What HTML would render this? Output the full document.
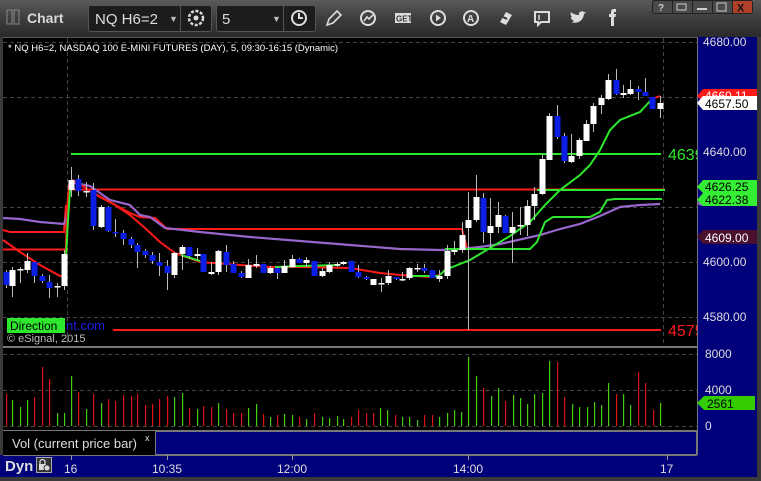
<!DOCTYPE html>
<html><head><meta charset="utf-8"><style>
html,body{margin:0;padding:0;background:#2b2b2b;}
svg{display:block;font-family:"Liberation Sans",sans-serif;}
</style></head><body>
<svg id="s" width="761" height="481" viewBox="0 0 761 481" xmlns="http://www.w3.org/2000/svg">
<defs>
<linearGradient id="tb" x1="0" y1="0" x2="0" y2="1"><stop offset="0" stop-color="#5a5a5a"/><stop offset="0.5" stop-color="#3d3d3d"/><stop offset="1" stop-color="#2a2a2a"/></linearGradient>
</defs>
<rect x="0" y="0" width="761" height="481" fill="#3a3a3a"/>
<rect x="0" y="0" width="761" height="37" fill="url(#tb)"/>
<rect x="7" y="10" width="5" height="14" fill="none" stroke="#888" stroke-width="1"/>
<rect x="14" y="10" width="5" height="14" fill="none" stroke="#888" stroke-width="1"/>
<text x="27" y="23" font-size="14" font-weight="bold" fill="#d8d8d8">Chart</text>
<rect x="88.5" y="5.5" width="123" height="26" rx="2" fill="#1c1c1c" stroke="#555"/>
<line x1="180.5" y1="6" x2="180.5" y2="31" stroke="#555"/>
<text x="95" y="24" font-size="15" fill="#ddd">NQ H6=2</text>
<text x="169" y="22" font-size="9" fill="#bbb">▼</text>
<circle cx="196" cy="18" r="7" fill="none" stroke="#ddd" stroke-width="2.5" stroke-dasharray="3 1.6"/>
<circle cx="196" cy="18" r="2.5" fill="#ddd"/>
<rect x="216.5" y="5.5" width="99" height="26" rx="2" fill="#1c1c1c" stroke="#555"/>
<line x1="283.5" y1="6" x2="283.5" y2="31" stroke="#555"/>
<text x="222" y="24" font-size="15" fill="#ddd">5</text>
<text x="272" y="22" font-size="9" fill="#bbb">▼</text>
<circle cx="299" cy="18" r="7" fill="none" stroke="#ddd" stroke-width="2"/>
<path d="M299 13v5h4" fill="none" stroke="#ddd" stroke-width="2"/>
<path d="M327 25l2-6 8-8 4 4-8 8z" fill="none" stroke="#ddd" stroke-width="1.6"/>
<circle cx="368" cy="18" r="7" fill="none" stroke="#ddd" stroke-width="2"/>
<path d="M364 21l3-4 2 2 4-4" fill="none" stroke="#ddd" stroke-width="1.6"/>
<rect x="395" y="13" width="16" height="10" fill="#ddd"/>
<text x="396" y="21.5" font-size="8" font-weight="bold" fill="#333">GET</text>
<circle cx="438" cy="18" r="7" fill="none" stroke="#ddd" stroke-width="2"/>
<path d="M436 14.5v7l5-3.5z" fill="#ddd"/>
<circle cx="471" cy="18" r="7" fill="none" stroke="#ddd" stroke-width="2"/>
<text x="467" y="22" font-size="10" font-weight="bold" fill="#ddd">A</text>
<path d="M500 22l6-10 6 3-6 10z" fill="#ddd"/>
<path d="M503 17l4 2" stroke="#333" stroke-width="2"/>
<path d="M535 12h14v10h-8l-3 3v-3h-3z" fill="none" stroke="#ddd" stroke-width="2"/>
<line x1="539" y1="15" x2="539" y2="20" stroke="#ddd" stroke-width="1.5"/>
<path d="M571 22c5 2 12 0 13-8l2-2-2 0c-2-2-6 0-5 3-3 0-6-1-8-3 -1 2 0 4 1 5h-1c0 2 1 3 3 4-1 1-2 1-3 1z" fill="#ddd"/>
<path d="M611 26v-9h-2v-3h2v-2c0-2 1-3 3-3h2v3h-1c-1 0-1 0-1 1v1h2l-0.5 3h-1.5v9z" fill="#ddd"/>
<rect x="652.5" y="0.5" width="100" height="13" rx="2" fill="#4a4a4a" stroke="#222"/>
<rect x="733" y="1" width="19" height="12" fill="#b0402a"/>
<line x1="672.5" y1="0" x2="672.5" y2="14" stroke="#222"/><line x1="692.5" y1="0" x2="692.5" y2="14" stroke="#222"/><line x1="712.5" y1="0" x2="712.5" y2="14" stroke="#222"/><line x1="732.5" y1="0" x2="732.5" y2="14" stroke="#222"/>
<text x="658" y="11" font-size="10" font-weight="bold" fill="#ccc">?</text>
<rect x="677" y="4" width="9" height="6" fill="none" stroke="#ccc"/>
<line x1="697" y1="9" x2="707" y2="9" stroke="#ccc" stroke-width="2"/>
<rect x="717" y="3" width="9" height="8" fill="none" stroke="#ccc"/>
<text x="737" y="11.5" font-size="11" font-weight="bold" fill="#111">X</text>

<rect x="3" y="37" width="694" height="418" fill="#000"/>
<rect x="697" y="37" width="61" height="418" fill="#00007a"/>
<rect x="0" y="455" width="761" height="26" fill="#00007a"/>
<rect x="0" y="477" width="761" height="4" fill="#3a3a3a"/>
<rect x="757" y="37" width="4" height="444" fill="#3a3a3a"/>
<line x1="697.5" y1="37" x2="697.5" y2="455" stroke="#777"/>
<line x1="3" y1="37.5" x2="697" y2="37.5" stroke="#555"/>
<g stroke="#444" stroke-dasharray="4 3" stroke-width="1">
<line x1="3" y1="42.5" x2="697" y2="42.5"/><line x1="3" y1="97.5" x2="697" y2="97.5"/><line x1="3" y1="207.5" x2="697" y2="207.5"/><line x1="3" y1="262.5" x2="697" y2="262.5"/><line x1="3" y1="317.5" x2="697" y2="317.5"/>
<line x1="3" y1="354.5" x2="697" y2="354.5"/><line x1="3" y1="390.5" x2="697" y2="390.5"/><line x1="3" y1="426.5" x2="697" y2="426.5"/>
<line x1="67.5" y1="38" x2="67.5" y2="347"/><line x1="663.5" y1="38" x2="663.5" y2="347"/>
</g>
<text x="8" y="51" font-size="9.5" fill="#fff">* NQ H6=2, NASDAQ 100 E-MINI FUTURES (DAY), 5, 09:30-16:15 (Dynamic)</text>
<line x1="71" y1="154" x2="661" y2="154" stroke="#2ee82e" stroke-width="2"/>
<line x1="71" y1="189.5" x2="665" y2="189.5" stroke="#ff1a1a" stroke-width="2"/>
<line x1="537" y1="190" x2="665" y2="190" stroke="#2ee82e" stroke-width="2"/>
<line x1="113" y1="330" x2="661" y2="330" stroke="#ff1a1a" stroke-width="2"/>
<polyline fill="none" stroke="#ff1a1a" stroke-width="2" points="88,190 130,213 140,217 155,218 167,229 462,229 467,248"/>
<polyline fill="none" stroke="#ff1a1a" stroke-width="2" points="3,230 10,232 64,232 66,205"/>
<line x1="3" y1="249.5" x2="68" y2="249.5" stroke="#ff1a1a" stroke-width="2"/>
<polyline fill="none" stroke="#9966cc" stroke-width="2.2" points="3,218 20,219 40,222 64,224 66,218 71,182 90,186 110,200 130,205 140,215 150,217 165,228 200,232 250,237 300,241 350,245 400,249 440,250 460,249 480,247 500,244 540,235 560,229 580,224 600,216 620,207 640,205 660,204"/>
<polyline fill="none" stroke="#ff1a1a" stroke-width="2" points="3,240 20,252 40,265 60,276 65,276 67,210 69,185 72,180 86,188 100,197 115,205 130,215 145,228 160,242 175,253 200,262 240,265 270,267 300,267 350,268 380,273 400,275 430,277 440,275"/>
<g fill="none" stroke="#2ee82e" stroke-width="2">
<polyline points="66,258 68,220 70,190 72,180"/>
<polyline points="181,255 200,261"/>
<polyline points="275,267 300,266 340,265"/>
<polyline points="410,276 440,276"/>
<polyline points="440,275 445,270 470,260 490,248 510,236 530,222 545,205 560,190 580,175 590,165 600,150 610,130 620,120 640,112 652,99"/>
<polyline points="445,249 530,249 537,242 545,222 553,217 590,217 600,212 607,200 615,199 662,199"/>
</g>
<line x1="652" y1="99" x2="660" y2="96" stroke="#ff1a1a" stroke-width="2"/>
<g id="candles"></g>
<text x="668" y="160" font-size="16" fill="#2ee82e">4639</text>
<text x="668" y="336" font-size="16" fill="#ff1a1a">4575</text>
<rect x="697" y="37" width="60" height="310" fill="#00007a"/>
<line x1="697.5" y1="37" x2="697.5" y2="455" stroke="#777"/>
<g font-size="12" fill="#ddd">
<text x="703" y="46">4680.00</text>
<text x="703" y="156">4640.00</text>
<text x="703" y="266">4600.00</text>
<text x="703" y="321">4580.00</text>
</g>
<path d="M697 96l6-7h54v13h-54z" fill="#ff1a1a"/><text x="705" y="100" font-size="12" fill="#fff">4660.11</text>
<path d="M697 103l6-7h54v14h-54z" fill="#fff"/><text x="705" y="108" font-size="12" fill="#000">4657.50</text>
<path d="M697 204l5-6h55v8h-55z" fill="#9966cc"/>
<path d="M697 187l6-7h54v13h-54z" fill="#33ee33"/><text x="705" y="191" font-size="12" fill="#000">4626.25</text>
<path d="M697 200l6-7h54v13h-54z" fill="#33ee33"/><text x="705" y="204" font-size="12" fill="#000">4622.38</text>
<path d="M697 237l6-7h54v14h-54z" fill="#4a1030"/><text x="705" y="242" font-size="12" fill="#fff">4609.00</text>
<text x="66" y="330" font-size="13" fill="#1e1ee8">nt.com</text>
<rect x="7" y="318" width="58" height="15" fill="#2ee82e"/>
<text x="10" y="330" font-size="12" fill="#000">Direction</text>
<text x="7" y="342" font-size="11" fill="#bbb">© eSignal, 2015</text>
<line x1="3" y1="347" x2="697" y2="347" stroke="#777" stroke-width="2"/>
<g id="vol"></g>
<line x1="3" y1="430.5" x2="697" y2="430.5" stroke="#777"/>
<g font-size="12" fill="#ddd">
<text x="705" y="358">8000</text><text x="705" y="394">4000</text><text x="705" y="430">0</text>
</g>
<path d="M697 403l7-7h51v14h-51z" fill="#33cc00"/><text x="707" y="408" font-size="12" fill="#000">2561</text>
<rect x="3" y="431" width="152" height="24" fill="#000"/>
<text x="12" y="448" font-size="13" fill="#ddd">Vol (current price bar)</text>
<text x="145" y="441" font-size="9" fill="#ddd">x</text>
<rect x="155.5" y="431.5" width="541" height="23" fill="#00007a" stroke="#777"/>
<line x1="3" y1="455.5" x2="697" y2="455.5" stroke="#777"/>
<g stroke="#999"><line x1="71.5" y1="455" x2="71.5" y2="460"/><line x1="167.5" y1="455" x2="167.5" y2="460"/><line x1="292.5" y1="455" x2="292.5" y2="460"/><line x1="468.5" y1="455" x2="468.5" y2="460"/><line x1="667.5" y1="455" x2="667.5" y2="460"/></g>
<text x="5" y="471" font-size="15" font-weight="bold" fill="#ddd">Dyn</text>
<rect x="36.5" y="457.5" width="15" height="15" fill="#333" stroke="#aaa"/>
<rect x="39" y="464" width="7" height="6" fill="#ddd"/>
<path d="M40 464v-2a2.5 2.5 0 0 1 5 0v2" fill="none" stroke="#ddd" stroke-width="1.2"/>
<circle cx="47" cy="468" r="3" fill="#ddd" stroke="#333"/>
<g font-size="12" fill="#ddd">
<text x="64" y="473">16</text><text x="152" y="473">10:35</text><text x="277" y="473">12:00</text><text x="453" y="473">14:00</text><text x="660" y="473">17</text>
</g>
</svg>
<script>
var NS="http://www.w3.org/2000/svg";
function el(n,a,p){var e=document.createElementNS(NS,n);for(var k in a)e.setAttribute(k,a[k]);p.appendChild(e);return e;}
var C=[[6,272,285,270,288,'b'],[12,270,286,267,297,'w'],[20,269,270,267,283,'w'],[27,261,270,253,273,'w'],[34,262,276,262,283,'b'],[42,276,281,274,283,'b'],[49,282,288,275,298,'b'],[57,286,287,283,297,'w'],[64,254,286,250,290,'w'],
[71,180,190,167,197,'w'],[78,179,191,175,196,'b'],[86,191,192,182,197,'w'],[93,190,226,183,230,'b'],[101,207,227,205,228,'w'],[108,207,231,206,232,'b'],[115,232,233,219,237,'b'],[123,233,239,230,245,'b'],[131,239,245,237,248,'b'],[137,245,252,243,268,'b'],[145,251,255,249,258,'b'],[152,255,261,252,264,'b'],[159,262,266,253,276,'b'],[167,266,273,260,290,'b'],[174,253,275,252,278,'w'],[182,247,254,245,270,'w'],[189,247,256,247,258,'b'],[197,254,256,248,260,'w'],[203,254,272,254,272,'b'],[211,272,274,262,275,'w'],[218,251,272,250,275,'w'],[226,252,265,245,272,'b'],[233,264,273,261,273,'b'],[241,273,277,271,278,'b'],[248,265,278,259,278,'w'],[256,264,266,255,268,'w'],[263,264,273,264,273,'b'],[270,268,273,266,274,'w'],[277,268,273,267,279,'b'],[284,266,273,260,273,'w'],[292,259,267,255,268,'w'],[299,259,263,258,263,'b'],[306,260,263,257,267,'w'],[314,261,276,261,276,'b'],[322,271,276,268,277,'w'],[329,265,272,262,273,'w'],[337,264,265,262,267,'w'],[343,262,264,261,265,'w'],[351,261,272,261,272,'b'],[358,272,277,265,278,'b'],[366,277,279,276,280,'b'],[373,279,285,279,285,'w'],[381,283,284,278,292,'w'],[388,276,283,270,285,'w'],[396,277,279,277,280,'b'],[402,279,280,272,281,'w'],[409,268,278,267,280,'w'],[417,268,269,264,272,'w'],[424,268,271,264,273,'b'],[432,270,278,270,278,'b'],[439,276,279,270,282,'w'],
[447,251,276,245,279,'w'],[454,250,252,241,255,'w'],[462,235,250,222,253,'w'],[468,220,228,192,330,'w'],[476,197,220,175,222,'w'],[483,198,232,193,243,'b'],[490,226,233,198,247,'w'],[498,215,227,202,233,'w'],[505,216,233,215,233,'b'],[512,227,233,212,263,'w'],[520,225,226,207,235,'w'],[527,206,225,200,236,'w'],[534,194,206,187,220,'w'],[542,159,194,154,195,'w'],[549,116,160,113,160,'w'],[557,116,137,105,139,'b'],[564,136,161,133,163,'b'],[571,156,162,134,163,'w'],[579,140,156,138,159,'w'],[586,124,141,120,141,'w'],[593,106,124,103,132,'w'],[601,98,105,95,114,'w'],[608,80,99,74,100,'w'],[616,80,94,69,95,'b'],[623,93,95,85,98,'w'],[630,89,94,80,95,'w'],[638,89,92,86,100,'b'],[645,92,96,78,96,'b'],[652,97,109,97,109,'b'],[660,103,109,96,118,'w']];
var g=document.getElementById('candles');
C.forEach(function(c){
 el('line',{x1:c[0]+.5,y1:c[3],x2:c[0]+.5,y2:c[4],stroke:'#bbb','stroke-width':1},g);
 var h=Math.max(c[2]-c[1],1.5);
 el('rect',{x:c[0]-2.5,y:c[1],width:6,height:h,fill:c[5]=='w'?'#fff':'#0a1ee6'},g);
});
var V=[[6,394,'r'],[12,400,'g'],[20,407,'g'],[27,400,'g'],[34,397,'r'],[42,367,'r'],[49,379,'r'],[57,413,'g'],[64,413,'g'],[71,376,'g'],[78,392,'r'],[86,409,'g'],[93,394,'r'],[101,403,'g'],[108,399,'r'],[115,401,'r'],[123,395,'r'],[131,396,'r'],[137,394,'r'],[145,405,'r'],[152,404,'r'],[159,399,'r'],[167,396,'r'],[174,397,'g'],[182,393,'g'],[189,408,'r'],[197,409,'g'],[203,406,'r'],[211,407,'r'],[218,403,'g'],[226,409,'r'],[233,413,'r'],[241,413,'r'],[248,408,'g'],[256,404,'g'],[263,414,'r'],[270,417,'g'],[277,415,'r'],[284,414,'g'],[292,415,'g'],[299,417,'r'],[306,419,'g'],[314,413,'r'],[322,417,'g'],[329,418,'g'],[337,416,'g'],[343,419,'g'],[351,417,'r'],[358,410,'r'],[366,413,'r'],[373,413,'r'],
[380,408,'g'],[387,410,'g'],[395,415,'r'],[402,417,'g'],[409,417,'g'],[417,420,'g'],[424,415,'r'],[432,415,'r'],[439,417,'g'],[447,413,'g'],[454,410,'g'],[461,412,'g'],[468,357,'g'],[476,376,'g'],[483,388,'r'],[491,396,'g'],[498,388,'g'],[505,401,'r'],[513,395,'g'],[520,398,'g'],[527,404,'g'],[534,394,'g'],[542,393,'g'],[549,361,'g'],[557,362,'r'],[564,397,'r'],[572,404,'g'],[579,407,'g'],[587,407,'g'],[594,402,'g'],[601,405,'g'],[608,383,'g'],[616,394,'r'],[623,394,'g'],[630,405,'g'],[638,372,'r'],[645,383,'r'],[653,410,'r'],[660,403,'g']];
var vg=document.getElementById('vol');
V.forEach(function(v){el('rect',{x:v[0],y:v[1],width:1.2,height:426-v[1],fill:v[2]=='g'?'#44cc11':'#dd1111'},vg);});
</script>
</body></html>
